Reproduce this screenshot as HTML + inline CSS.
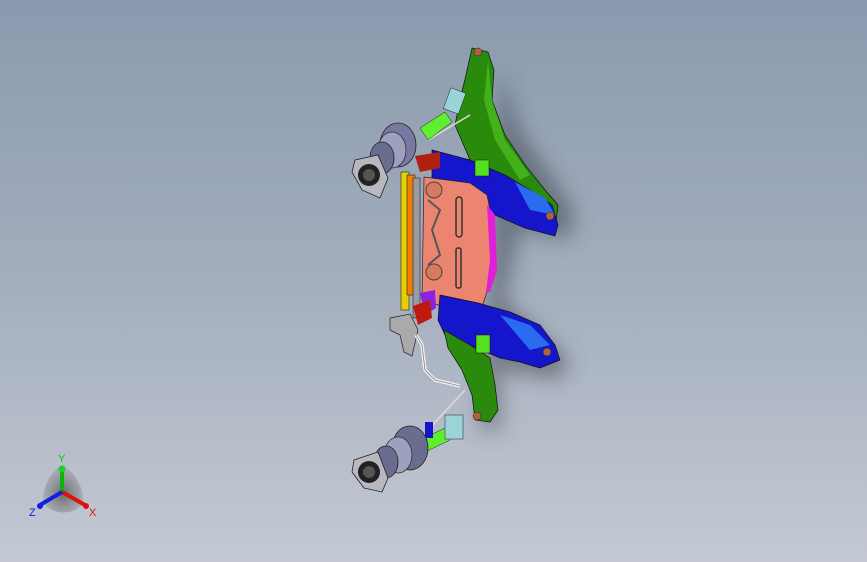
<!DOCTYPE html>
<html><head><meta charset="utf-8"><style>
html,body{margin:0;padding:0;width:867px;height:562px;overflow:hidden}
body{background:linear-gradient(#8a9aae 0%,#a3aebd 50%,#c4c9d3 100%)}
svg{position:absolute;left:0;top:0}
</style></head><body>
<svg width="867" height="562" viewBox="0 0 867 562">
<defs>
<filter id="sh" x="-50%" y="-50%" width="200%" height="200%"><feGaussianBlur stdDeviation="10"/></filter>
<radialGradient id="tri" cx="0.5" cy="0.6" r="0.5"><stop offset="0" stop-color="#444" stop-opacity=".7"/><stop offset="1" stop-color="#777" stop-opacity=".3"/></radialGradient>
</defs>
<!-- shadows -->
<path d="M500 70 L520 130 L575 210 L570 240 L520 230 L505 300 L570 360 L560 380 L500 370 L500 430 L480 430 Z" fill="#3a3f4a" opacity=".5" filter="url(#sh)"/>
<!-- yellow/orange strip -->
<rect x="401" y="172" width="8" height="138" fill="#e6d000" stroke="#222" stroke-width=".6"/>
<rect x="407" y="175" width="8" height="120" fill="#ee8200" stroke="#222" stroke-width=".6"/>
<rect x="413" y="178" width="7" height="140" fill="#9a9aa3" stroke="#222" stroke-width=".6"/>
<!-- green top arm -->
<path d="M472 48 L488 52 L494 70 L492 100 L505 135 L525 165 L545 190 L558 205 L556 222 L530 205 L500 185 L470 160 L455 125 L460 100 L466 75 Z" fill="#2a8a0c" stroke="#111" stroke-width=".7"/>
<path d="M488 60 L492 100 L505 140 L530 175 L520 180 L495 140 L484 100 Z" fill="#4fc21f" opacity=".7"/>
<!-- blue top -->
<path d="M432 150 L470 160 L505 175 L530 190 L552 205 L558 225 L555 236 L525 228 L495 215 L460 200 L432 190 Z" fill="#1515cc" stroke="#111" stroke-width=".7"/>
<path d="M515 182 L545 198 L555 215 L530 210 Z" fill="#2a6cf0"/>
<rect x="475" y="160" width="14" height="16" fill="#55e020" stroke="#111" stroke-width=".5"/>
<!-- salmon plate -->
<path d="M424 177 L470 183 L487 195 L493 225 L492 270 L486 295 L478 318 L455 312 L438 305 L422 300 Z" fill="#ec8570" stroke="#222" stroke-width=".7"/>
<path d="M487 205 L495 215 L497 270 L490 292 L486 292 L490 260 Z" fill="#e020d8"/>
<path d="M428 200 L440 210 L432 230 L440 255 L428 265" fill="none" stroke="#555" stroke-width="2"/>
<rect x="456" y="197" width="6" height="40" rx="3" fill="none" stroke="#333" stroke-width="1.5"/>
<rect x="456" y="248" width="5" height="40" rx="2" fill="none" stroke="#333" stroke-width="1.5"/>
<circle cx="434" cy="190" r="8" fill="#d87a60" stroke="#444" stroke-width="1"/>
<circle cx="434" cy="272" r="8" fill="#d87a60" stroke="#444" stroke-width="1"/>
<!-- blue bottom -->
<path d="M440 295 L478 303 L510 312 L540 325 L555 345 L560 360 L540 368 L520 362 L500 358 L470 345 L445 335 L438 320 Z" fill="#1515cc" stroke="#111" stroke-width=".7"/>
<path d="M500 315 L530 325 L550 345 L530 350 Z" fill="#2a6cf0"/>
<!-- green bottom arm -->
<path d="M444 330 L470 345 L490 358 L495 385 L498 410 L490 422 L475 420 L472 395 L462 370 L448 348 Z" fill="#2a8a0c" stroke="#111" stroke-width=".7"/>
<rect x="476" y="335" width="14" height="18" fill="#55e020" stroke="#111" stroke-width=".5"/>
<!-- purple/red bits -->
<path d="M420 293 L435 290 L436 308 L425 315 Z" fill="#8a22e0"/>
<path d="M413 306 L430 300 L432 318 L418 325 Z" fill="#c01a10"/>
<path d="M415 156 L440 152 L440 168 L420 172 Z" fill="#b02010"/>
<!-- gray bracket -->
<path d="M390 318 L410 314 L418 330 L412 356 L404 352 L400 335 L390 330 Z" fill="#aaa" stroke="#222" stroke-width=".7"/>
<!-- tube -->
<path d="M416 335 L422 345 L425 370 L435 380 L460 386" fill="none" stroke="#eee" stroke-width="3.5"/>
<path d="M416 335 L422 345 L425 370 L435 380 L460 386" fill="none" stroke="#666" stroke-width=".6"/>
<line x1="465" y1="390" x2="428" y2="430" stroke="#ddd" stroke-width="1.5"/>
<line x1="470" y1="115" x2="428" y2="140" stroke="#ddd" stroke-width="1.5"/>
<!-- top light green cylinder -->
<path d="M420 128 L445 112 L452 122 L428 140 Z" fill="#5ef030" stroke="#222" stroke-width=".5"/>
<rect x="447" y="90" width="16" height="22" fill="#9ad4d8" stroke="#222" stroke-width=".5" transform="rotate(20 455 100)"/>
<!-- bottom cylinder -->
<path d="M420 440 L445 428 L450 440 L425 452 Z" fill="#5ef030" stroke="#222" stroke-width=".5"/>
<rect x="445" y="415" width="18" height="24" fill="#9ad4d8" stroke="#222" stroke-width=".5"/>
<rect x="425" y="422" width="8" height="16" fill="#1515cc"/>
<!-- top spring/hub -->
<ellipse cx="398" cy="145" rx="18" ry="22" fill="#7878a0" stroke="#222" stroke-width=".8"/>
<ellipse cx="392" cy="150" rx="14" ry="18" fill="#9ea0c0" stroke="#333" stroke-width=".8"/>
<ellipse cx="382" cy="158" rx="12" ry="16" fill="#6a6c90" stroke="#222" stroke-width=".8"/>
<path d="M355 160 L378 155 L388 178 L380 198 L362 190 L352 172 Z" fill="#b8b8c0" stroke="#222" stroke-width=".8"/>
<circle cx="369" cy="175" r="11" fill="#222"/>
<circle cx="369" cy="175" r="6" fill="#555"/>
<!-- bottom spring/hub -->
<ellipse cx="410" cy="448" rx="18" ry="22" fill="#6a6c90" stroke="#222" stroke-width=".8"/>
<ellipse cx="398" cy="455" rx="14" ry="18" fill="#9ea0c0" stroke="#333" stroke-width=".8"/>
<ellipse cx="386" cy="462" rx="12" ry="16" fill="#6a6c90" stroke="#222" stroke-width=".8"/>
<path d="M354 460 L378 452 L388 478 L382 492 L364 488 L352 472 Z" fill="#b8b8c0" stroke="#222" stroke-width=".8"/>
<circle cx="369" cy="472" r="11" fill="#222"/>
<circle cx="369" cy="472" r="6" fill="#555"/>
<!-- bolts -->
<circle cx="478" cy="52" r="4" fill="#b06040" stroke="#222" stroke-width=".5"/>
<circle cx="550" cy="216" r="4" fill="#b06040" stroke="#222" stroke-width=".5"/>
<circle cx="547" cy="352" r="4" fill="#b06040" stroke="#222" stroke-width=".5"/>
<circle cx="477" cy="416" r="4" fill="#b06040" stroke="#222" stroke-width=".5"/>
<!-- triad -->
<path d="M62 465 C45 475 40 500 45 505 C55 515 72 515 82 505 C86 498 80 475 62 465 Z" fill="url(#tri)"/>
<line x1="62" y1="492" x2="62" y2="470" stroke="#10b010" stroke-width="4"/>
<circle cx="62" cy="469" r="3.5" fill="#20d020"/>
<line x1="62" y1="492" x2="85" y2="505" stroke="#e01010" stroke-width="4"/>
<circle cx="86" cy="506" r="3" fill="#e01010"/>
<line x1="62" y1="492" x2="40" y2="505" stroke="#1020e0" stroke-width="4"/>
<circle cx="40" cy="506" r="3" fill="#1020e0"/>
<text x="58" y="462" font-family="Liberation Sans, sans-serif" font-size="11" fill="#10c010">Y</text>
<text x="89" y="516" font-family="Liberation Sans, sans-serif" font-size="11" fill="#e01010">X</text>
<text x="29" y="516" font-family="Liberation Sans, sans-serif" font-size="11" fill="#1020e0">Z</text>
</svg>
</body></html>
